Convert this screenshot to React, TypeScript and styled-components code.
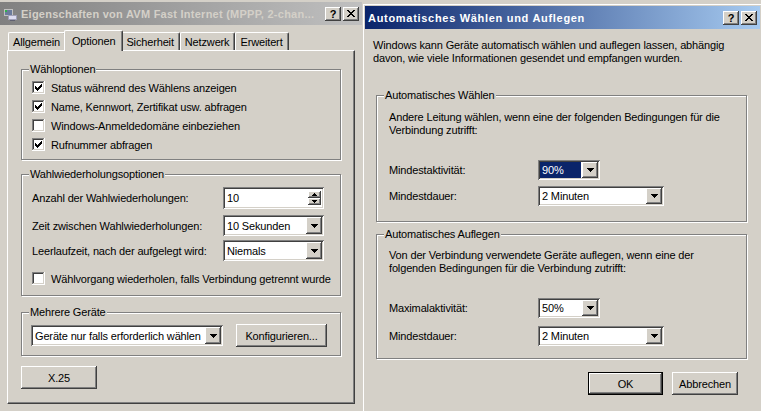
import React from 'react';
import styled, { createGlobalStyle, css } from 'styled-components';

const GlobalStyle = createGlobalStyle`
  html, body {
    margin: 0;
    padding: 0;
  }

  body {
    background: #d4d0c8;
    font-family: Tahoma, "Liberation Sans", Arial, sans-serif;
    font-size: 11px;
    letter-spacing: -0.15px;
    color: #000;
  }
`;

const raised = css`
  background: #d4d0c8;
  box-shadow: inset -1px -1px #404040, inset 1px 1px #fff,
    inset -2px -2px #808080, inset 2px 2px #d4d0c8;
`;

const sunken = css`
  background: #fff;
  box-shadow: inset 1px 1px #808080, inset -1px -1px #fff,
    inset 2px 2px #404040, inset -2px -2px #d4d0c8;
`;

const Screen = styled.div`
  display: flex;
  width: 761px;
  height: 411px;
  overflow: hidden;
`;

const LeftWindow = styled.div`
  width: 363px;
  flex-shrink: 0;
  display: flex;
  flex-direction: column;
  padding: 2px 1px 0 0;
  box-sizing: border-box;
`;

const RightWindow = styled.div`
  flex: 1;
  display: flex;
  flex-direction: column;
  margin-top: 4px;
  border-left: 1px solid #fff;
  border-top: 1px solid #fff;
  padding: 1px 1px 0 1px;
`;

const TitleBar = styled.div<{ $active?: boolean }>`
  height: 23px;
  display: flex;
  align-items: center;
  gap: 2px;
  padding: 0 3px 0 2px;
  background: ${(p) =>
    p.$active
      ? 'linear-gradient(to right, #0a246a, #a6caf0)'
      : 'linear-gradient(to right, #808080, #c0c0c0)'};
  color: ${(p) => (p.$active ? '#fff' : '#d4d0c8')};
`;

const TitleText = styled.div<{ $spacing: number }>`
  flex: 1;
  min-width: 0;
  font-weight: bold;
  letter-spacing: ${(p) => p.$spacing}px;
  white-space: nowrap;
  overflow: hidden;
  padding-left: 1px;
`;

const TitleButtons = styled.div`
  display: flex;
  gap: 2px;
  flex-shrink: 0;
`;

const TitleButton = styled.div`
  ${raised};
  width: 16px;
  height: 14px;
  display: flex;
  align-items: center;
  justify-content: center;
  color: #000;
  font-weight: bold;
  font-size: 11px;
  line-height: 14px;
`;

const LeftBody = styled.div`
  padding: 5px 0 0 7px;
`;

const TabRow = styled.div`
  display: flex;
  align-items: flex-end;
  height: 20px;
  padding-left: 1px;
  position: relative;
  z-index: 1;
`;

const Tab = styled.div<{ $selected?: boolean }>`
  height: ${(p) => (p.$selected ? 21 : 18)}px;
  padding: ${(p) => (p.$selected ? '0 7px' : '0 5px 0 4px')};
  margin: 0 ${(p) => (p.$selected ? -2 : 0)}px
    ${(p) => (p.$selected ? -1 : 0)}px;
  display: flex;
  align-items: center;
  background: #d4d0c8;
  border-top: 1px solid #fff;
  border-left: 1px solid #fff;
  border-right: 1px solid #404040;
  border-radius: 2px 2px 0 0;
  box-shadow: inset -1px 0 #808080;
  box-sizing: border-box;
  white-space: nowrap;
  z-index: ${(p) => (p.$selected ? 2 : 1)};
`;

const TabPanel = styled.div`
  width: 348px;
  height: 354px;
  box-sizing: border-box;
  border-top: 1px solid #fff;
  border-left: 1px solid #fff;
  border-right: 1px solid #404040;
  border-bottom: 1px solid #404040;
  box-shadow: inset -1px -1px #808080;
  padding: 12px 13px 0 13px;
`;

const Group = styled.fieldset<{ $pad: string; $mt?: number }>`
  margin: ${(p) => p.$mt ?? 0}px 0 0 0;
  padding: ${(p) => p.$pad};
  border: 1px solid #808080;
  box-shadow: inset 1px 1px #fff, 1px 1px #fff;
  min-inline-size: 0;
`;

const Legend = styled.legend<{ $indent?: number }>`
  padding: 0 1px;
  margin-left: ${(p) => p.$indent ?? -3}px;
  line-height: 13px;
  background: #d4d0c8;
`;

const CheckRow = styled.div<{ $mt?: number }>`
  display: flex;
  align-items: center;
  gap: 6px;
  height: 19px;
  margin-top: ${(p) => p.$mt ?? 0}px;
  white-space: nowrap;

  svg {
    flex-shrink: 0;
  }
`;

const FieldRow = styled.div<{ $h: number; $mt?: number; $label: number }>`
  display: grid;
  grid-template-columns: ${(p) => p.$label}px auto;
  align-items: center;
  height: ${(p) => p.$h}px;
  margin-top: ${(p) => p.$mt ?? 0}px;
  white-space: nowrap;
`;

const Combo = styled.div<{ $w: number; $h?: number }>`
  ${sunken};
  width: ${(p) => p.$w}px;
  height: ${(p) => p.$h ?? 21}px;
  box-sizing: border-box;
  padding: 2px;
  display: flex;
  flex-shrink: 0;
`;

const ComboText = styled.div<{ $selected?: boolean }>`
  flex: 1;
  display: flex;
  align-items: center;
  padding-left: 2px;
  margin-right: 1px;
  background: ${(p) => (p.$selected ? '#0a246a' : 'transparent')};
  color: ${(p) => (p.$selected ? '#fff' : '#000')};
  white-space: nowrap;
  overflow: hidden;
`;

const ArrowButton = styled.div`
  ${raised};
  width: 16px;
  display: flex;
  align-items: center;
  justify-content: center;
`;

const SpinBox = styled.div`
  ${sunken};
  width: 101px;
  height: 22px;
  box-sizing: border-box;
  padding: 2px;
  display: flex;
`;

const SpinText = styled.div`
  flex: 1;
  display: flex;
  align-items: center;
  padding-left: 2px;
`;

const SpinButtons = styled.div`
  width: 13px;
  display: flex;
  flex-direction: column;
  padding: 2px 0;
  margin-right: 1px;
`;

const SpinButton = styled.div`
  ${raised};
  flex: 1;
  display: flex;
  align-items: center;
  justify-content: center;
`;

const Button = styled.div<{ $w: number; $default?: boolean }>`
  ${raised};
  width: ${(p) => p.$w}px;
  height: 23px;
  box-sizing: border-box;
  display: flex;
  align-items: center;
  justify-content: center;
  white-space: nowrap;
  flex-shrink: 0;
  ${(p) =>
    p.$default &&
    css`
      border: 1px solid #000;
      box-shadow: inset -1px -1px #404040, inset 1px 1px #fff,
        inset -2px -2px #808080;
    `}
`;

const MultiRow = styled.div`
  display: flex;
  align-items: center;
  gap: 13px;
  margin-left: -1px;
`;

const X25Row = styled.div`
  margin-top: 10px;
`;

const RightBody = styled.div`
  padding: 10px 13px 0 11px;
  display: flex;
  flex-direction: column;
`;

const Intro = styled.p`
  margin: 0 0 0 -3px;
  line-height: 13px;
`;

const Paragraph = styled.p`
  margin: 0;
  line-height: 13px;
`;

const ButtonRow = styled.div`
  display: flex;
  justify-content: flex-end;
  gap: 9px;
  padding-right: 9px;
  margin-top: 13px;
`;

const Arrow = () => (
  <svg width="7" height="4" viewBox="0 0 7 4" shapeRendering="crispEdges">
    <path d="M0 0h7v1h-7zM1 1h5v1h-5zM2 2h3v1h-3zM3 3h1v1h-1z" fill="#000" />
  </svg>
);

const SmallArrow = ({ up }: { up?: boolean }) => (
  <svg width="5" height="3" viewBox="0 0 5 3" shapeRendering="crispEdges">
    {up ? (
      <path d="M2 0h1v1h-1zM1 1h3v1h-3zM0 2h5v1h-5z" fill="#000" />
    ) : (
      <path d="M0 0h5v1h-5zM1 1h3v1h-3zM2 2h1v1h-1z" fill="#000" />
    )}
  </svg>
);

const CheckBox = ({ checked }: { checked?: boolean }) => (
  <svg width="13" height="13" viewBox="0 0 13 13" shapeRendering="crispEdges">
    <rect x="0" y="0" width="13" height="13" fill="#fff" />
    <path d="M0 0h12v1h-11v11h-1z" fill="#808080" />
    <path d="M1 1h10v1h-9v9h-1z" fill="#404040" />
    <path d="M1 11h11v1h-11zM11 1h1v11h-1z" fill="#d4d0c8" />
    <path d="M0 12h13v1h-13zM12 0h1v13h-1z" fill="#fff" />
    {checked && (
      <path
        d="M9 3h1v1h-1zM8 4h2v1h-2zM3 5h1v1h-1zM7 5h3v1h-3zM3 6h2v1h-2zM6 6h3v1h-3zM3 7h5v1h-5zM4 8h3v1h-3zM5 9h1v1h-1z"
        fill="#000"
      />
    )}
  </svg>
);

const CloseGlyph = () => (
  <svg width="8" height="7" viewBox="0 0 8 7" shapeRendering="crispEdges">
    <path
      d="M0 0h2v1h-2zM6 0h2v1h-2zM1 1h2v1h-2zM5 1h2v1h-2zM2 2h4v1h-4zM3 3h2v1h-2zM2 4h4v1h-4zM1 5h2v1h-2zM5 5h2v1h-2zM0 6h2v1h-2zM6 6h2v1h-2z"
      fill="#000"
    />
  </svg>
);

const ConnectionIcon = () => (
  <svg width="16" height="16" viewBox="0 0 16 16" shapeRendering="crispEdges">
    <rect x="2" y="3" width="9" height="7" fill="#c0c0c0" />
    <rect x="3" y="4" width="7" height="5" fill="#6b7b9c" />
    <rect x="3" y="4" width="2" height="2" fill="#2fb24a" />
    <rect x="5" y="10" width="4" height="1" fill="#808080" />
    <rect x="6" y="9" width="9" height="5" fill="#a0a0b8" />
    <rect x="7" y="10" width="7" height="3" fill="#dcdcf0" />
    <rect x="8" y="14" width="5" height="1" fill="#606070" />
  </svg>
);

type ComboProps = { value: string; width: number; selected?: boolean; height?: number };

const ComboBox: React.FC<ComboProps> = ({ value, width, selected, height }) => (
  <Combo $w={width} $h={height}>
    <ComboText $selected={selected}>{value}</ComboText>
    <ArrowButton>
      <Arrow />
    </ArrowButton>
  </Combo>
);

const tabs = ['Allgemein', 'Optionen', 'Sicherheit', 'Netzwerk', 'Erweitert'];

const App: React.FC = () => {
  return (
    <Screen>
      <GlobalStyle />
      <LeftWindow>
        <TitleBar>
          <ConnectionIcon />
          <TitleText $spacing={0.25}>
            Eigenschaften von AVM Fast Internet (MPPP, 2-chan...
          </TitleText>
          <TitleButtons>
            <TitleButton>?</TitleButton>
            <TitleButton>
              <CloseGlyph />
            </TitleButton>
          </TitleButtons>
        </TitleBar>
        <LeftBody>
          <TabRow>
            {tabs.map((tab) => (
              <Tab key={tab} $selected={tab === 'Optionen'}>
                {tab}
              </Tab>
            ))}
          </TabRow>
          <TabPanel>
            <Group $pad="2px 10px 5px 10px">
              <Legend>Wähloptionen</Legend>
              <CheckRow>
                <CheckBox checked />
                Status während des Wählens anzeigen
              </CheckRow>
              <CheckRow>
                <CheckBox checked />
                Name, Kennwort, Zertifikat usw. abfragen
              </CheckRow>
              <CheckRow>
                <CheckBox />
                Windows-Anmeldedomäne einbeziehen
              </CheckRow>
              <CheckRow>
                <CheckBox checked />
                Rufnummer abfragen
              </CheckRow>
            </Group>
            <Group $pad="6px 10px 7px 10px" $mt={8}>
              <Legend>Wahlwiederholungsoptionen</Legend>
              <FieldRow $h={22} $label={191}>
                Anzahl der Wahlwiederholungen:
                <SpinBox>
                  <SpinText>10</SpinText>
                  <SpinButtons>
                    <SpinButton>
                      <SmallArrow up />
                    </SpinButton>
                    <SpinButton>
                      <SmallArrow />
                    </SpinButton>
                  </SpinButtons>
                </SpinBox>
              </FieldRow>
              <FieldRow $h={21} $mt={6} $label={191}>
                Zeit zwischen Wahlwiederholungen:
                <ComboBox value="10 Sekunden" width={101} />
              </FieldRow>
              <FieldRow $h={21} $mt={4} $label={191}>
                Leerlaufzeit, nach der aufgelegt wird:
                <ComboBox value="Niemals" width={101} />
              </FieldRow>
              <CheckRow $mt={8}>
                <CheckBox />
                Wählvorgang wiederholen, falls Verbindung getrennt wurde
              </CheckRow>
            </Group>
            <Group $pad="5px 10px 8px 10px" $mt={10}>
              <Legend>Mehrere Geräte</Legend>
              <MultiRow>
                <ComboBox value="Geräte nur falls erforderlich wählen" width={192} />
                <Button $w={91}>Konfigurieren...</Button>
              </MultiRow>
            </Group>
            <X25Row>
              <Button $w={76}>X.25</Button>
            </X25Row>
          </TabPanel>
        </LeftBody>
      </LeftWindow>

      <RightWindow>
        <TitleBar $active>
          <TitleText $spacing={0.7}>Automatisches Wählen und Auflegen</TitleText>
          <TitleButtons>
            <TitleButton>?</TitleButton>
            <TitleButton>
              <CloseGlyph />
            </TitleButton>
          </TitleButtons>
        </TitleBar>
        <RightBody>
          <Intro>
            Windows kann Geräte automatisch wählen und auflegen lassen, abhängig
            <br />
            davon, wie viele Informationen gesendet und empfangen wurden.
          </Intro>
          <Group $pad="9px 11px 15px 12px" $mt={24}>
            <Legend $indent={-5}>Automatisches Wählen</Legend>
            <Paragraph>
              Andere Leitung wählen, wenn eine der folgenden Bedingungen für die
              <br />
              Verbindung zutrifft:
            </Paragraph>
            <FieldRow $h={20} $mt={23} $label={149}>
              Mindestaktivität:
              <ComboBox value="90%" width={62} height={20} selected />
            </FieldRow>
            <FieldRow $h={20} $mt={6} $label={149}>
              Mindestdauer:
              <ComboBox value="2 Minuten" width={126} height={20} />
            </FieldRow>
          </Group>
          <Group $pad="8px 11px 12px 12px" $mt={6}>
            <Legend $indent={-5}>Automatisches Auflegen</Legend>
            <Paragraph>
              Von der Verbindung verwendete Geräte auflegen, wenn eine der
              <br />
              folgenden Bedingungen für die Verbindung zutrifft:
            </Paragraph>
            <FieldRow $h={20} $mt={23} $label={149}>
              Maximalaktivität:
              <ComboBox value="50%" width={62} height={20} />
            </FieldRow>
            <FieldRow $h={20} $mt={8} $label={149}>
              Mindestdauer:
              <ComboBox value="2 Minuten" width={126} height={20} />
            </FieldRow>
          </Group>
          <ButtonRow>
            <Button $w={75} $default>
              OK
            </Button>
            <Button $w={66}>Abbrechen</Button>
          </ButtonRow>
        </RightBody>
      </RightWindow>
    </Screen>
  );
};

export default App;
